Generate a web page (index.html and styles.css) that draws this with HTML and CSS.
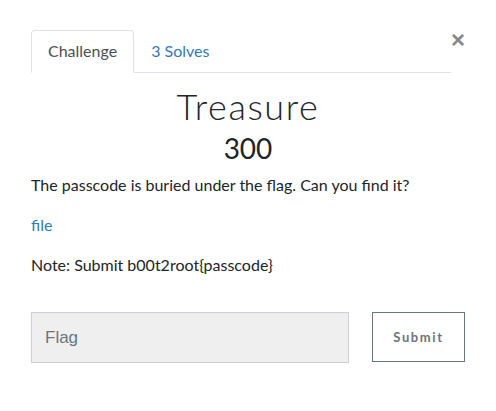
FILE: index.html
```html
<!DOCTYPE html>
<html>
<head>
<meta charset="utf-8">
<link rel="stylesheet" href="styles.css">
</head>
<body>
<div class="modal">
  <button class="close" aria-label="Close">&times;</button>
  <ul class="tabs">
    <li class="tab active">Challenge</li>
    <li class="tab link">3 Solves</li>
  </ul>
  <h2 class="title">Treasure</h2>
  <h3 class="value">300</h3>
  <div class="desc">
    <p>The passcode is buried under the flag. Can you find it?</p>
    <p><a class="file" href="#">file</a></p>
    <p>Note: Submit b00t2root{passcode}</p>
  </div>
  <div class="submit-row">
    <input class="flag" type="text" placeholder="Flag">
    <button class="submit">Submit</button>
  </div>
</div>
</body>
</html>
```
FILE: styles.css
```css
html, body {
  margin: 0;
  padding: 0;
  background: #fff;
}
body {
  font-family: Lato, "Open Sans", sans-serif;
  color: #212529;
}
.modal {
  position: relative;
  padding: 30px 31px 0 31px;
  width: 434px;
}
.close {
  position: absolute;
  top: 30px;
  left: 451px;
  border: 0;
  background: none;
  padding: 0;
  font-family: "Liberation Sans", sans-serif;
  font-size: 24px;
  font-weight: bold;
  color: #888;
  line-height: 20px;
}
.tabs {
  list-style: none;
  margin: 0;
  padding: 0;
  display: flex;
  width: 420px;
  border-bottom: 1px solid #dee2e6;
}
.tab {
  font-size: 16px;
  padding: 10px 16px 11px 16px;
  line-height: 20px;
  border: 1px solid transparent;
  border-top-left-radius: 4px;
  border-top-right-radius: 4px;
  margin-bottom: -1px;
}
.tab.active {
  color: #495057;
  border-color: #dee2e6 #dee2e6 #fff;
}
.tab.link {
  color: #337ab7;
}
.title {
  margin: 13px 0 0 0;
  text-align: center;
  font-weight: 300;
  font-size: 36px;
  line-height: 40px;
  letter-spacing: 1.6px;
  color: #212529;
}
.value {
  margin: 6px 0 0 0;
  text-align: center;
  font-weight: 400;
  font-size: 28px;
  line-height: 32px;
  color: #212529;
}
.desc {
  margin-top: 9px;
  font-size: 16px;
  line-height: 24px;
}
.desc p {
  margin: 0 0 16px 0;
}
.file {
  color: #337ab7;
  text-decoration: none;
}
.submit-row {
  display: flex;
  justify-content: space-between;
  margin-top: 35px;
}
.flag {
  box-sizing: border-box;
  width: 318px;
  height: 51px;
  background: #efefef;
  border: 1px solid #ccd0d4;
  padding: 0 13px;
  font-family: "Liberation Sans", sans-serif;
  font-size: 17px;
  color: #495057;
}
.flag::placeholder {
  color: #6c757d;
}
.submit {
  box-sizing: border-box;
  width: 93px;
  height: 50px;
  background: #fff;
  border: 1px solid #6c757d;
  font-family: Lato, sans-serif;
  font-weight: 700;
  font-size: 13px;
  letter-spacing: 1.6px;
  color: #6c757d;
}
```
